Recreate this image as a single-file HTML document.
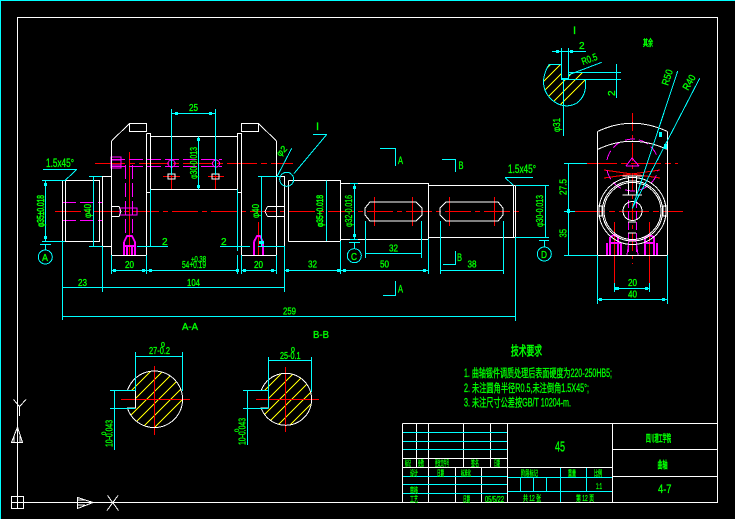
<!DOCTYPE html>
<html><head><meta charset="utf-8"><style>
html,body{margin:0;padding:0;background:#000;width:735px;height:519px;overflow:hidden}
svg{display:block}
text{font-family:"Liberation Sans","Noto Sans CJK SC",sans-serif;fill:#0f0;stroke:#0f0;stroke-width:.35}
.c{stroke-width:.6}
</style></head><body>
<svg width="735" height="519" viewBox="0 0 735 519" xmlns="http://www.w3.org/2000/svg" shape-rendering="crispEdges">
<rect width="735" height="519" fill="#000"/>
<defs>
<clipPath id="h1"><path d="M135.5 390.5H127.4A28.3 28.3 0 1 1 127.4 408.1H135.5Z"/></clipPath>
<clipPath id="h2"><path d="M268.5 390.5H261.2A26 26 0 1 1 261.2 408.1H268.5Z"/></clipPath>
<clipPath id="h3"><path d="M549.3 64.3H561.5V78.5H568.5V72.5H584L585.7 83Q586 96 577 103Q564 110 552 100Q543 92 543.5 80Q545 70 549.3 64.3Z"/></clipPath>
</defs>

<!-- yellow hatch -->
<g stroke="#ff0" stroke-width="1" fill="none">
<g clip-path="url(#h1)"><path d="M90 420L150 360M90 432L160 362M100 434L170 364M110 436L180 366M120 438L190 368M130 440L200 370M140 442L210 372M150 444L220 374M160 446L230 376M170 448L240 378"/></g>
<g clip-path="url(#h2)"><path d="M235 420L295 360M235 432L305 362M245 434L315 364M255 436L325 366M265 438L335 368M275 440L345 370M285 442L355 372M295 444L365 374"/></g>
<g clip-path="url(#h3)"><path d="M530 85L560 55M530 95L570 55M535 100L580 55M540 105L590 55M550 105L600 55M560 105L610 55"/></g>
</g>

<!-- red -->
<g stroke="#f00" stroke-width="1" fill="none">
<path stroke-dasharray="26 4 5 4" d="M55 211.5H522"/>
<path stroke-dasharray="30 4 6 4" d="M95 163.5H293"/>
<path d="M129.5 152V256M171.5 152V190M215.5 152V190M258.5 222V256M163 176.5H180M208 176.5H224"/>
<path d="M374.5 197V226M412.5 197V226M449.5 197V226M494.5 197V226"/>
<path stroke-dasharray="18 4 4 4" d="M632.5 113V264"/>
<path stroke-dasharray="30 4 6 4" d="M587 163.5H678"/>
<path stroke-dasharray="30 4 6 4" d="M575 211.5H683"/>
<path d="M614.5 222V283M649.5 222V283"/>
<path d="M121 399.5H190M154.5 366V435M256 399.5H319M285.5 367V432"/>
<path d="M604 170L660 178M604 178L660 170"/>
</g>

<!-- magenta -->
<g stroke="#f0f" stroke-width="1" fill="none">
<path stroke-dasharray="14 4" d="M62 202.5H103M62 220.5H103"/>
<path stroke-dasharray="14 4" d="M111 159.5H222M111 166.5H222"/>
<path stroke-dasharray="14 4" d="M125.5 165V237M132.5 165V237"/>
<path d="M111 157H121V168H111ZM111 160H121M111 165H121M120 208H137V215H120Z"/>
<circle cx="171.5" cy="163.5" r="3.5"/><circle cx="216" cy="163.5" r="3.5"/>
<path d="M124 242L127 236H132L135 242V255M124 242V255M124 246H135M127 246V255M132 246V255" stroke-width="2"/>
<path d="M254 242L257 236H260L263 242V255M254 242V255" stroke-width="2"/>
<path stroke-dasharray="10 4" d="M607 160A26 26 0 0 1 658 160"/>
<path stroke-dasharray="10 4" d="M607 170A26 26 0 0 0 658 170"/>
<path d="M626 166L632 158L639 166M626 166H639"/>
<path stroke-dasharray="8 3" d="M628.5 200V255M636.5 200V255"/>
<path d="M610 237L614 235L618 237V255M610 237V255M645 237L649 235L654 237V255M645 237V255M610 243H621M645 243H655M621 243V255M657 243V255M607 243V255" stroke-width="2"/>
<path d="M627 255L629 240H636L638 255"/>
</g>

<!-- white -->
<g stroke="#fff" stroke-width="1" fill="none">
<path d="M17.5 17.5H717.5V502.5H17.5Z"/>
<path d="M11.5 496.5H23.5V508.5H11.5ZM17.5 496.5V508.5M11.5 502.5H23.5"/>
<path d="M62.5 180.5H99.5V241.5H62.5ZM65.5 180.5V241.5M99.5 176.5H102.5V246.5H99.5M102.5 176.5H111.5M102.5 246.5H111.5"/>
<path d="M111.5 141V255.5H146.5V133.5M129.5 123.5H146.5V131.5H129.5ZM146.5 133.5H150.5V192.5H146.5M150.5 136.5H237.5V192.5H241.5V133.5H237.5V136.5M150.5 189.5H237.5M150.5 136.5V189.5M241.5 123.5H258.5V131.5H241.5ZM241.5 192V255.5H276.5V141"/>
<path d="M111.5 206.5H119.5M111.5 216.5H119.5M267.5 206.5H284.5M267.5 216.5H284.5"/>
<path d="M276.5 176.5H284.5V246.5H276.5M288.5 180.5V241.5"/>
<path d="M288.5 180.5H340.5V241.5H288.5M340.5 183.5H428.5V239.5H340.5M428.5 185.5H513.5V237.5H428.5M515.5 185.5V237.5M513.5 185.5V237.5M513.5 185.5H515.5M513.5 237.5H515.5"/>
<path d="M597.5 131.5V255.5M667.5 131.5V255.5M597.5 255.5H667.5"/>
<path d="M402.5 423.5H717.5M402.5 423.5V502.5M402.5 502.5H717.5M507.5 423.5V502.5M612.5 423.5V502.5M416.5 423.5V467M428.5 423.5V502.5M463.5 423.5V467M490.5 423.5V467M402.5 458.5H507.5M402.5 467.5H612.5M455.5 467V502.5M481.5 467V502.5M612.5 449.5H717.5M612.5 476.5H717.5"/>
<path d="M111.5 141L129.5 123.5M258.5 123.5L276.5 141"/>
<path d="M119 206.5L121 211.5L119 216.5M267.5 206.5L265 211.5L267.5 216.5"/>
<path d="M370 202H416L422 208V215L416 221H370L365 215V208Z"/>
<path d="M446 202H498L503 208V215L498 221H446L440 215V208Z"/>
<path d="M597.5 131.5Q632 115 667.5 131.5M597.5 149.5Q632 133 667.5 149.5"/>
<circle cx="632.5" cy="211" r="33.5"/><circle cx="632.5" cy="211" r="30"/><circle cx="632.5" cy="211" r="28.5"/><circle cx="632.5" cy="211" r="9.5"/>
<path d="M598 206H602V216H598M667 206H663V216H667"/>
<path d="M622.5 176H642M622.5 195H642M628.5 176V195M636.5 176V195M628 222H636M628 233H636"/>
<rect x="168" y="174" width="7" height="5"/><rect x="212" y="174" width="7" height="5"/>
<path d="M135.5 390.5H127.4A28.3 28.3 0 1 1 127.4 408.1H135.5Z"/>
<path d="M268.5 390.5H261.2A26 26 0 1 1 261.2 408.1H268.5Z"/>
<path d="M13.5 399.5L19.5 406.5L26 399.5M19.5 406.5V416"/>
<path d="M17.5 427L11.5 442.5H22.5ZM14 442V436M20 442V436"/>
<path d="M77.5 497.5V508.5L93 502.5ZM78 500H85M78 505H85"/>
<path d="M107.5 495.5L118.5 510.5M118 495.5L107 510.5"/>
</g>

<!-- cyan -->
<g stroke="#0ff" stroke-width="1" fill="none">
<path d="M0.5 0V519M0 0.5H735"/>
<path d="M171.5 109V175M215.5 109V175M171.5 113.5H215.5M198.5 136.5V189.5"/>
<path d="M93.5 176.5V246.5M89 176.5H102M89 246.5H102M45.5 180V241M42 180.5H65M42 241.5H65M43 169.5H77"/>
<path d="M137 246.5H168M220 246.5H250M150.5 189.5V247M237.5 189.5V251"/>
<path d="M111.5 255V274M146.5 255V274M237.5 255V274M241.5 255V274M276.5 255V274M111.5 270.5H146.5M146.5 270.5H237.5M241.5 270.5H276.5"/>
<path d="M62.5 241V320M102.5 246V292M284.5 246V292M62.5 287.5H284.5M62.5 316.5H515.5M515.5 237V321"/>
<path d="M261.5 176.5V246.5M258 176.5H280M258 246.5H284.5"/>
<path d="M40 244.5H51M45.5 244.5V250M349 242.5H360M354.5 242.5V248.5M539 240.5H549M544.5 240.5V247"/>
<path d="M313 134.5H327M326.5 180.5V241M354.5 183.5V239.5M350 183.5H358M350 239.5H358M545.5 185.5V237.5M516 185.5H549M516 237.5H549"/>
<path d="M365.5 221V258M421.5 221V258M365.5 253.5H421.5M440.5 221V274M503.5 221V274M440.5 270.5H503.5M284.5 270.5H340.5M340.5 241V274M340.5 270.5H428.5M428.5 239V274"/>
<path d="M505 177.5H533"/>
<path d="M380 148.5H395.5V166M442 159.5H455.5V172M455.5 251V264.5H443M395.5 281V295.5H383"/>
<path d="M552 51.5H586M561.5 48V80M568.5 48V76M563.5 78V136M568 72.5H621M562 79.5H621M616.5 64V98"/>
<path d="M549 64.5H561.5V78.5H568.5V72.5H584"/>
<path d="M568.5 163.5V211M568.5 211V255M564 163.5H587M564 211.5H575M564 255.5H597M614.5 283V292M649.5 283V292M614.5 288.5H649.5M597.5 255V304M667.5 255V304M597.5 299.5H667.5"/>
<path d="M135.5 352V391M182.5 352V391M135.5 356.5H182.5M110 390.5H135M110 408.5H135M114.5 391V450"/>
<path d="M268.5 357V408M311.5 357V392M268.5 360.5H311.5M243 390.5H268M243 408.5H268M247.5 391V445"/>
<path d="M403 432.5H507M403 441.5H507M403 449.5H507M403 476.5H507M403 484.5H507M403 493.5H507M508 477.5H612M508 491.5H612M560.5 468V502M586.5 468V491M520.5 477V491M533.5 477V491M546.5 477V491"/>
<path d="M76.7 169.5L65 180.5M505 177.5L513.5 185.5M326.7 134.5L294 173.5M291.7 148.3L277.3 176M601.7 62.3L568.3 75M677.7 71L632.3 208.3M699.7 78.3L632.3 208.3"/>
<path d="M549.3 64.3Q545 70 543.5 80Q543 92 552 100Q564 110 577 103Q586 96 585.7 83V79"/>
<circle cx="45.3" cy="257" r="7"/><circle cx="354.3" cy="255.7" r="7"/><circle cx="544.3" cy="254" r="7"/><circle cx="286.7" cy="179.3" r="7"/>
<g fill="#0ff" stroke="none"><rect x="175" y="112" width="3" height="3"/><rect x="209" y="112" width="3" height="3"/><rect x="44" y="183" width="3" height="3"/><rect x="44" y="236" width="3" height="3"/><rect x="113" y="269" width="3" height="3"/><rect x="142" y="269" width="3" height="3"/><rect x="149" y="269" width="3" height="3"/><rect x="236" y="269" width="3" height="3"/><rect x="243" y="269" width="3" height="3"/><rect x="271" y="269" width="3" height="3"/><rect x="286" y="269" width="3" height="3"/><rect x="337" y="269" width="3" height="3"/><rect x="343" y="269" width="3" height="3"/><rect x="423" y="269" width="3" height="3"/><rect x="353" y="186" width="3" height="3"/><rect x="353" y="234" width="3" height="3"/><rect x="197" y="138" width="3" height="3"/><rect x="197" y="185" width="3" height="3"/><rect x="259" y="241" width="5" height="3"/><rect x="567" y="209" width="3" height="4"/><rect x="615" y="287" width="4" height="3"/><rect x="645" y="287" width="3" height="3"/><rect x="599" y="298" width="3" height="3"/><rect x="662" y="298" width="3" height="3"/><rect x="556" y="50" width="3" height="3"/><rect x="570" y="50" width="3" height="3"/><rect x="659" y="132" width="3" height="5"/><rect x="664" y="144" width="3" height="5"/></g>
</g>

<!-- green text -->
<g font-size="10">
<text x="189" y="111" textLength="9" lengthAdjust="spacingAndGlyphs">25</text>
<text x="46" y="167" textLength="28" lengthAdjust="spacingAndGlyphs" font-size="12">1.5x45°</text>
<text transform="translate(44,227) rotate(-90)" textLength="32" lengthAdjust="spacingAndGlyphs" class="c">φ35±0.018</text>
<text transform="translate(91,218) rotate(-90)" textLength="14" lengthAdjust="spacingAndGlyphs">φ40</text>
<text transform="translate(197,179) rotate(-90)" textLength="32" lengthAdjust="spacingAndGlyphs">φ30-0.013</text>
<text transform="translate(259,218) rotate(-90)" textLength="14" lengthAdjust="spacingAndGlyphs">φ40</text>
<text x="42" y="261" textLength="6" lengthAdjust="spacingAndGlyphs">A</text>
<text x="351" y="260" textLength="6" lengthAdjust="spacingAndGlyphs">C</text>
<text x="541" y="258" textLength="6" lengthAdjust="spacingAndGlyphs">D</text>
<text x="162" y="245">2</text>
<text x="221" y="245">2</text>
<text x="125" y="268" textLength="9" lengthAdjust="spacingAndGlyphs">20</text>
<text x="254" y="268" textLength="9" lengthAdjust="spacingAndGlyphs">20</text>
<text x="182" y="268" textLength="24" lengthAdjust="spacingAndGlyphs">54+0.19</text>
<text x="191" y="262" textLength="15" lengthAdjust="spacingAndGlyphs" font-size="8">+0.38</text>
<text x="78" y="286" textLength="9" lengthAdjust="spacingAndGlyphs">23</text>
<text x="187" y="286" textLength="13" lengthAdjust="spacingAndGlyphs">104</text>
<text x="283" y="314.5" textLength="13" lengthAdjust="spacingAndGlyphs">259</text>
<text x="182" y="330" textLength="16" lengthAdjust="spacingAndGlyphs">A-A</text>
<text x="313" y="338" textLength="16" lengthAdjust="spacingAndGlyphs">B-B</text>
<text x="316" y="130" font-size="11">I</text>
<text transform="translate(280,157) rotate(-45)" font-size="9">φ2</text>
<text transform="translate(323,227) rotate(-90)" textLength="32" lengthAdjust="spacingAndGlyphs" font-size="9" class="c">φ35+0.018</text>
<text transform="translate(352,227) rotate(-90)" textLength="32" lengthAdjust="spacingAndGlyphs">φ32-0.016</text>
<text transform="translate(543,227) rotate(-90)" textLength="32" lengthAdjust="spacingAndGlyphs">φ30-0.013</text>
<text x="389" y="251.5" textLength="9" lengthAdjust="spacingAndGlyphs">32</text>
<text x="308" y="267.5" textLength="9" lengthAdjust="spacingAndGlyphs">32</text>
<text x="380" y="267.5" textLength="9" lengthAdjust="spacingAndGlyphs">50</text>
<text x="467.5" y="267.5" textLength="9" lengthAdjust="spacingAndGlyphs">38</text>
<text x="508" y="173" textLength="28" lengthAdjust="spacingAndGlyphs" font-size="12">1.5x45°</text>
<text x="398" y="164" textLength="5" lengthAdjust="spacingAndGlyphs" font-size="11">A</text>
<text x="458.5" y="169" textLength="5" lengthAdjust="spacingAndGlyphs" font-size="11">B</text>
<text x="457" y="261" textLength="5" lengthAdjust="spacingAndGlyphs" font-size="11">B</text>
<text x="398" y="292.5" textLength="5" lengthAdjust="spacingAndGlyphs" font-size="11">A</text>
<text x="573" y="34" font-size="11">I</text>
<text x="579" y="49">2</text>
<text transform="translate(583,65) rotate(-20)" textLength="16" lengthAdjust="spacingAndGlyphs">R0.5</text>
<text transform="translate(615,96) rotate(-90)">2</text>
<text transform="translate(560,132) rotate(-90)" textLength="14" lengthAdjust="spacingAndGlyphs">φ31</text>
<text x="643" y="46" textLength="10" lengthAdjust="spacingAndGlyphs" font-size="9" class="c">其余</text>
<text transform="translate(668,86) rotate(-72)" textLength="16" lengthAdjust="spacingAndGlyphs">R50</text>
<text transform="translate(688,91) rotate(-60)" textLength="16" lengthAdjust="spacingAndGlyphs">R40</text>
<text transform="translate(566.5,195) rotate(-90)" textLength="16" lengthAdjust="spacingAndGlyphs">27.5</text>
<text transform="translate(566.5,237.5) rotate(-90)" textLength="8.5" lengthAdjust="spacingAndGlyphs">35</text>
<text x="628" y="286" textLength="9" lengthAdjust="spacingAndGlyphs">20</text>
<text x="628" y="297.5" textLength="9" lengthAdjust="spacingAndGlyphs">40</text>
<text x="149" y="354" textLength="21" lengthAdjust="spacingAndGlyphs">27-0.2</text>
<text x="161" y="347" font-size="7">0</text>
<text x="280" y="359" textLength="20.5" lengthAdjust="spacingAndGlyphs">25-0.1</text>
<text x="291" y="352" font-size="7">0</text>
<text transform="translate(112.5,447) rotate(-90)" textLength="27" lengthAdjust="spacingAndGlyphs">10-0.043</text>
<text transform="translate(106,435) rotate(-90)" font-size="6">0</text>
<text transform="translate(245.5,445) rotate(-90)" textLength="27" lengthAdjust="spacingAndGlyphs">10-0.043</text>
<text transform="translate(239,432) rotate(-90)" font-size="6">0</text>
<text x="511" y="355.5" textLength="31" lengthAdjust="spacingAndGlyphs" font-size="13" class="c">技术要求</text>
<text x="464" y="377" textLength="148" lengthAdjust="spacingAndGlyphs" font-size="11.5">1. 曲轴锻件调质处理后表面硬度为220-250HB5;</text>
<text x="464" y="392" textLength="125" lengthAdjust="spacingAndGlyphs" font-size="11.5">2. 未注圆角半径R0.5,未注倒角1.5X45°;</text>
<text x="464" y="406.5" textLength="107" lengthAdjust="spacingAndGlyphs" font-size="11.5">3. 未注尺寸公差按GB/T 10204-m.</text>
<text x="555" y="451.5" textLength="10" lengthAdjust="spacingAndGlyphs" font-size="15">45</text>
<text x="646" y="442" textLength="25" lengthAdjust="spacingAndGlyphs" font-size="10" class="c">四川理工学院</text>
<text x="657.5" y="468.5" textLength="10" lengthAdjust="spacingAndGlyphs" font-size="10" class="c">曲轴</text>
<text x="658" y="493" textLength="13.5" lengthAdjust="spacingAndGlyphs" font-size="12">4-7</text>
<g font-size="8" class="c" style="stroke-width:.6">
<text x="405" y="466" textLength="6" lengthAdjust="spacingAndGlyphs">标记</text>
<text x="418" y="466" textLength="6" lengthAdjust="spacingAndGlyphs">处数</text>
<text x="435" y="466" textLength="14" lengthAdjust="spacingAndGlyphs">更改文件号</text>
<text x="471" y="466" textLength="8" lengthAdjust="spacingAndGlyphs">签名</text>
<text x="494" y="466" textLength="6" lengthAdjust="spacingAndGlyphs">日期</text>
<text x="410" y="476" textLength="8" lengthAdjust="spacingAndGlyphs">设计</text>
<text x="437" y="476" textLength="7" lengthAdjust="spacingAndGlyphs">日期</text>
<text x="461" y="476" textLength="10" lengthAdjust="spacingAndGlyphs">标准化</text>
<text x="410" y="493" textLength="8" lengthAdjust="spacingAndGlyphs">审核</text>
<text x="410" y="502" textLength="8" lengthAdjust="spacingAndGlyphs">工艺</text>
<text x="463" y="502" textLength="7" lengthAdjust="spacingAndGlyphs">日期</text>
<text x="485" y="502" textLength="19" lengthAdjust="spacingAndGlyphs">05/5/22</text>
<text x="521" y="476" textLength="17" lengthAdjust="spacingAndGlyphs">阶段标记</text>
<text x="568" y="476" textLength="8" lengthAdjust="spacingAndGlyphs">重量</text>
<text x="594" y="476" textLength="8" lengthAdjust="spacingAndGlyphs">比例</text>
<text x="596" y="489" textLength="6" lengthAdjust="spacingAndGlyphs">1:1</text>
<text x="523" y="501" textLength="18" lengthAdjust="spacingAndGlyphs">共 12 张</text>
<text x="576" y="501" textLength="18" lengthAdjust="spacingAndGlyphs">第 12 页</text>
</g>
</g>
</svg>
</body></html>
